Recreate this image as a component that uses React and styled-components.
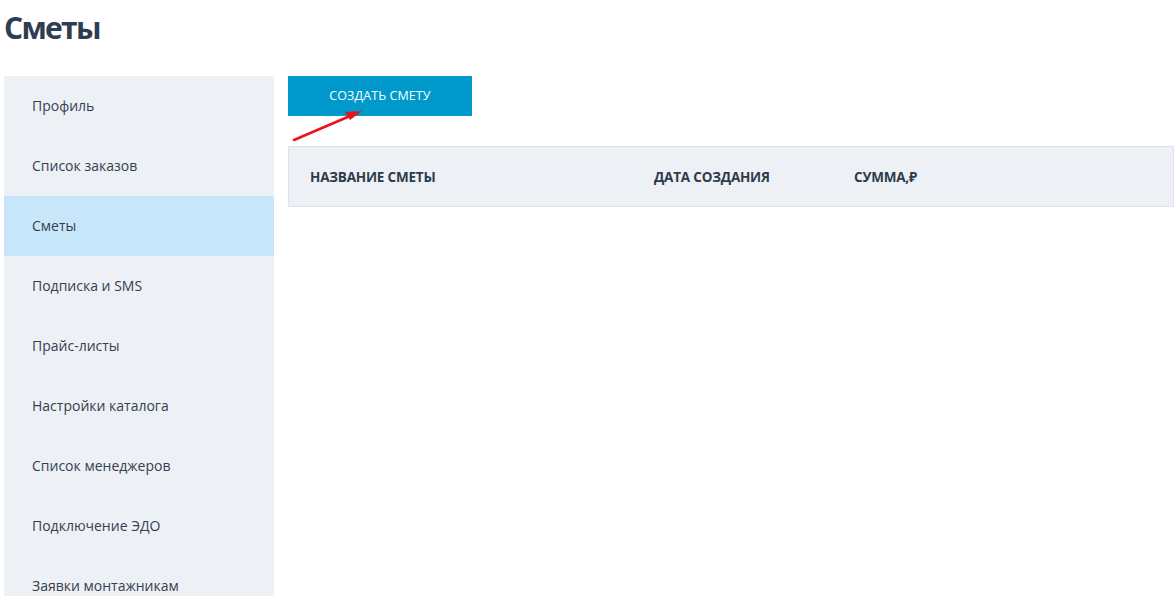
import React from "react";
import styled, { createGlobalStyle } from "styled-components";

const Global = createGlobalStyle`
  html, body { margin: 0; padding: 0; background: #fff; }
  body { font-family: "Open Sans", "Noto Sans", sans-serif; color: #2f3b4b; overflow: hidden; }
  * { box-sizing: border-box; }
`;

const Page = styled.div`
  position: relative;
  padding: 8px 0 0 4px;
  width: 1174px;
  height: 596px;
  overflow: hidden;
`;

const Title = styled.h1`
  margin: 0;
  height: 68px;
  font-size: 30px;
  font-weight: 700;
  line-height: 40px;
  color: #2e3d4f;
  letter-spacing: -1.7px;
`;

const Body = styled.div`
  display: flex;
  gap: 14px;
  align-items: flex-start;
`;

const Sidebar = styled.nav`
  width: 270px;
  background: #edf1f6;
  display: flex;
  flex-direction: column;
`;

const NavItem = styled.div`
  height: 60px;
  display: flex;
  align-items: center;
  padding: 0 0 2px 28px;
  font-size: 14px;
  color: #34404f;
  background: ${(p) => (p.$active ? "#c8e6fa" : "transparent")};
`;

const Main = styled.div`
  flex: 1;
  display: flex;
  flex-direction: column;
  gap: 30px;
`;

const CreateButton = styled.button`
  width: 184px;
  height: 40px;
  border: none;
  background: #0099cc;
  color: #fff;
  font-family: inherit;
  font-size: 12.5px;
  padding: 0 0 2px;
  text-transform: uppercase;
  letter-spacing: 0.1px;
  cursor: pointer;
`;

const TableHead = styled.div`
  height: 61px;
  background: #edf1f6;
  border: 1px solid #dce3eb;
  display: grid;
  grid-template-columns: 344px 200px 1fr;
  align-items: center;
  padding-left: 21px;
`;

const HeadCell = styled.div`
  font-size: 13.5px;
  font-weight: 700;
  text-transform: uppercase;
  color: #2f3b4b;
  letter-spacing: -0.2px;
`;

const Arrow = styled.svg`
  position: absolute;
  left: 290px;
  top: 106px;
  pointer-events: none;
`;

const items = [
  "Профиль",
  "Список заказов",
  "Сметы",
  "Подписка и SMS",
  "Прайс-листы",
  "Настройки каталога",
  "Список менеджеров",
  "Подключение ЭДО",
  "Заявки монтажникам",
];

export default function App() {
  return (
    <Page>
      <Global />
      <Title>Сметы</Title>
      <Body>
        <Sidebar>
          {items.map((t) => (
            <NavItem key={t} $active={t === "Сметы"}>
              {t}
            </NavItem>
          ))}
        </Sidebar>
        <Main>
          <CreateButton>Создать смету</CreateButton>
          <TableHead>
            <HeadCell>Название сметы</HeadCell>
            <HeadCell>Дата создания</HeadCell>
            <HeadCell>Сумма,₽</HeadCell>
          </TableHead>
        </Main>
      </Body>
      <Arrow width="80" height="40" viewBox="0 0 80 40">
        <line x1="4" y1="34" x2="60" y2="10" stroke="#e8141c" strokeWidth="2.5" strokeLinecap="round" />
        <polygon points="72,5 55,6 60,14" fill="#e8141c" />
      </Arrow>
    </Page>
  );
}
